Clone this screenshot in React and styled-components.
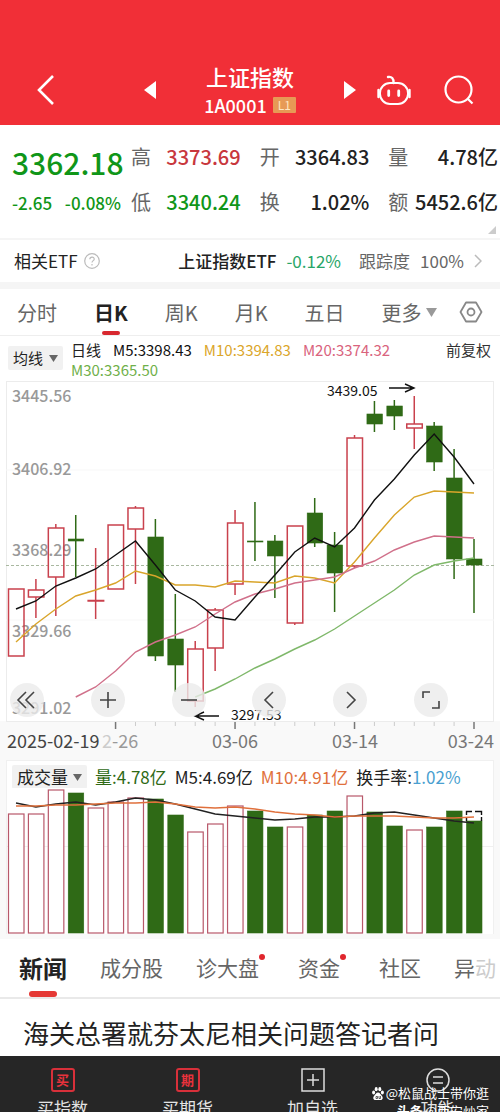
import React, { useState } from 'react'
import styled, { createGlobalStyle } from 'styled-components'

const GlobalStyle = createGlobalStyle`
  * {
    box-sizing: border-box;
  }
  body {
    margin: 0;
    background: #f9f9f9;
    color: #222;
    font-family: 'Noto Sans CJK SC', 'Noto Sans', sans-serif;
  }
  button, select {
    margin: 0;
    padding: 0;
    border: 0;
    background: none;
    color: inherit;
    font: inherit;
  }
  a {
    color: inherit;
    text-decoration: none;
  }
  svg {
    display: block;
    flex-shrink: 0;
  }
`

const Screen = styled.div`
  position: relative;
  overflow: hidden;
`

const Header = styled.header`
  display: grid;
  grid-template-columns: 1fr 212px 1fr;
  align-items: center;
  height: 125px;
  padding-top: 54px;
  background: #f12f37;
  color: white;
`

const HeaderSide = styled.div`
  display: flex;
  align-items: center;
  gap: 32px;
  padding: ${p => (p.$end ? '0 26px 0 0' : '0 0 0 36px')};
  justify-content: ${p => (p.$end ? 'flex-end' : 'flex-start')};
`

const HeaderCenter = styled.div`
  display: flex;
  align-items: center;
  justify-content: space-between;
  text-align: center;
`

const Title = styled.h1`
  margin: 0;
  font-size: 22px;
  font-weight: 500;
  line-height: 30px;
`

const Code = styled.div`
  display: flex;
  align-items: center;
  justify-content: center;
  gap: 6px;
  font-size: 18px;
  font-weight: 500;
  line-height: 28px;
`

const Level = styled.span`
  padding: 0 5px;
  border-radius: 1px;
  background: #e79a55;
  color: #ffe6c0;
  font-size: 12px;
  font-weight: 400;
  line-height: 16px;
`

const Quote = styled.section`
  position: relative;
  display: flex;
  gap: 10px;
  height: 115px;
  padding: 10px 2px 0 12px;
  border-bottom: 2px solid #f5f5f5;
  background: white;
`

const Last = styled.div`
  width: 109px;
  color: #109618;
`

const LastPrice = styled.div`
  font-size: 30px;
  font-weight: 500;
  line-height: 54px;
`

const Change = styled.div`
  display: flex;
  justify-content: space-between;
  font-size: 17px;
  font-weight: 500;
  line-height: 28px;
`

const Stats = styled.dl`
  flex: 1;
  display: grid;
  grid-template-columns: repeat(3, 1fr);
  grid-auto-rows: 45px;
  column-gap: 19px;
  margin: 0;
`

const Stat = styled.div`
  display: flex;
  justify-content: space-between;
  font-size: 20px;
  line-height: 44px;
  dt {
    color: #666;
  }
  dd {
    margin: 0;
    color: ${p => p.$color || '#222'};
    font-weight: 500;
    white-space: nowrap;
  }
`

const Corner = styled.svg`
  position: absolute;
  right: 4px;
  bottom: 4px;
`

const EtfRow = styled.section`
  display: flex;
  align-items: center;
  height: 49px;
  padding: 0 18px 0 14px;
  border-bottom: 7px solid #f5f5f5;
  background: white;
  font-size: 17px;
  line-height: 24px;
  white-space: nowrap;
`

const EtfLink = styled.a`
  display: flex;
  align-items: center;
  gap: 10px;
  margin-left: auto;
  strong {
    font-weight: 500;
  }
`

const EtfChange = styled.span`
  padding-right: 8px;
  color: #27a567;
`

const Muted = styled.span`
  color: #666;
`

const Help = styled.button`
  padding-left: 6px;
`

const Periods = styled.nav`
  display: flex;
  align-items: center;
  gap: 37px;
  height: 47px;
  padding: 0 17px;
  border-bottom: 1px solid #eee;
  background: white;
`

const Period = styled.button`
  display: flex;
  align-items: center;
  gap: 4px;
  position: relative;
  height: 46px;
  color: ${p => (p.$active ? '#222' : '#666')};
  font-size: 20px;
  font-weight: ${p => (p.$active ? 700 : 400)};
  white-space: nowrap;
  &::after {
    content: '';
    display: ${p => (p.$active ? 'block' : 'none')};
    position: absolute;
    bottom: 0;
    left: calc(50% - 9px);
    width: 18px;
    height: 4px;
    border-radius: 2px;
    background: #d8282f;
  }
`

const More = styled(Period)`
  margin-right: -16px;
`

const Settings = styled.button`
  margin-left: auto;
`

const Legend = styled.div`
  display: flex;
  gap: 8px;
  height: 44px;
  padding: 4px 9px 0 8px;
  background: white;
  font-size: 15px;
  line-height: 20px;
`

const Chip = styled.label`
  display: flex;
  align-items: center;
  gap: 5px;
  height: 24px;
  padding: 0 5px;
  border-radius: 2px;
  background: #f1f1f1;
  select {
    appearance: none;
    line-height: 24px;
  }
`

const LegendChip = styled(Chip)`
  margin-top: 6px;
`

const Averages = styled.div`
  flex: 1;
  display: flex;
  flex-wrap: wrap;
  column-gap: 12px;
`

const Colored = styled.span`
  color: ${p => p.$color};
`

const Adjust = styled.button`
  align-self: flex-start;
  color: #333;
  line-height: 20px;
`

const ChartArea = styled.section`
  position: relative;
`

const Chart = styled.svg`
  width: 100%;
  height: auto;
  font-family: 'Noto Sans CJK SC', 'Noto Sans', sans-serif;
`

const ChartButtons = styled.div`
  position: absolute;
  bottom: 43px;
  left: 10px;
  right: 52px;
  display: flex;
  justify-content: space-between;
`

const RoundButton = styled.button`
  display: flex;
  align-items: center;
  justify-content: center;
  width: 34px;
  height: 34px;
  border-radius: 50%;
  background: rgba(235, 235, 235, 0.8);
`

const VolumeHead = styled.div`
  display: flex;
  align-items: center;
  gap: 8px;
  height: 28px;
  margin: 0 6px;
  padding: 5px 5px 0;
  border: 1px solid #f0f0f0;
  border-bottom: 0;
  background: white;
  font-size: 17px;
  line-height: 24px;
  white-space: nowrap;
`

const NewsTabs = styled.nav`
  display: flex;
  gap: 33px;
  height: 60px;
  padding: 0 0 0 19px;
  overflow: hidden;
  border-bottom: 2px solid #e9e9e9;
  background: white;
`

const NewsTab = styled.button`
  position: relative;
  flex-shrink: 0;
  padding: 0 ${p => (p.$dot ? 6 : 0)}px 2px 0;
  color: ${p => (p.$active ? '#222' : '#666')};
  font-size: ${p => (p.$active ? 24 : 21)}px;
  font-weight: ${p => (p.$active ? 700 : 400)};
  &::after {
    content: '';
    display: ${p => (p.$active ? 'block' : 'none')};
    position: absolute;
    bottom: 0;
    left: calc(50% - 14px);
    width: 28px;
    height: 6px;
    border-radius: 3px;
    background: #e53935;
  }
`

const Dot = styled.i`
  position: absolute;
  top: 15px;
  right: 0;
  width: 6px;
  height: 6px;
  border-radius: 50%;
  background: #e0262d;
`

const FadedChar = styled.span`
  color: #ccc;
`

const Headline = styled.a`
  display: block;
  height: 57px;
  padding-left: 23px;
  overflow: hidden;
  background: white;
  font-size: 26px;
  line-height: 68px;
  white-space: nowrap;
`

const BottomBar = styled.nav`
  display: grid;
  grid-template-columns: repeat(4, 1fr);
  height: 56px;
  overflow: hidden;
  background: #262626;
`

const BottomItem = styled.button`
  display: flex;
  flex-direction: column;
  align-items: center;
  gap: 4px;
  padding-top: 12px;
  color: #e4e4e4;
  font-size: 17px;
  line-height: 24px;
`

const Stamp = styled.span`
  width: 24px;
  height: 24px;
  border: 2px solid #d8303a;
  border-radius: 3px;
  color: #e8323c;
  font-size: 13px;
  font-weight: 700;
  line-height: 20px;
`

const Watermark = styled.div`
  position: absolute;
  right: 11px;
  bottom: -8px;
  color: white;
  font-size: 13px;
  line-height: 18px;
  pointer-events: none;
  div {
    display: flex;
    align-items: center;
    justify-content: flex-end;
    gap: 2px;
  }
`

const RED = '#c9414d'
const GREEN = '#2f6a16'

// [body top, body bottom, high, low, is falling]
const candles = [
  [209, 276, 209, 276],
  [210, 217, 199, 238],
  [148, 197, 144, 236],
  [159, 161, 135, 197, true],
  [220.5, 221, 168, 239],
  [145, 209, 145, 209],
  [128, 149, 126, 204],
  [157, 276, 139, 281, true],
  [259, 285, 214, 312, true],
  [269, 321, 261, 327],
  [230, 268, 228, 291],
  [143, 204, 130, 215],
  [161, 162, 122, 181, true],
  [161, 176, 155, 218, true],
  [146, 243, 146, 245],
  [133, 163, 118, 167, true],
  [165, 193, 152, 232, true],
  [58, 186, 55, 188],
  [34, 44, 21, 52, true],
  [26, 36, 20, 50, true],
  [44, 48, 16, 69],
  [46, 82, 42, 91, true],
  [98, 179, 69, 199, true],
  [179, 185, 159, 233, true],
]

const averages = [
  { color: '#d9a52b', start: 0, ys: [262, 244, 229, 216, 210, 203, 191, 196, 205, 205, 207, 201, 202, 203, 196, 198, 203, 182, 158, 135, 117, 111, 112, 113] },
  { color: '#d0708a', start: 3, ys: [317, 307, 291, 272, 262, 255, 247, 234, 222, 214, 209, 203, 200, 197, 188, 181, 170, 162, 156, 157, 158] },
  { color: '#7fb86a', start: 9, ys: [317, 309, 299, 288, 279, 269, 260, 249, 236, 223, 210, 195, 185, 181, 178] },
  { color: '#111', start: 0, ys: [229, 221, 206, 198, 189, 175, 161, 185, 210, 221, 237, 240, 217, 195, 172, 158, 167, 148, 120, 99, 75, 54, 77, 104] },
]

const volumes = [26, 26, 2, 5, 20, 14, 10, 11, 27, 44, 36, 18, 23, 39, 39, 27, 23, 8, 24, 38, 42, 39, 23, 33]

const volumeAverages = [
  { color: '#222', start: 0, ys: [15, 19, 16, 14, 17, 14, 10, 12, 16, 21, 26, 28, 30, 32, 31, 29, 29, 28, 25, 24, 27, 30, 33, 35] },
  { color: '#e0703c', start: 0, ys: [18, 18, 17, 17, 16, 15, 15, 14, 16, 19, 20, 19, 21, 24, 26, 27, 29, 28, 28, 28, 29, 30, 30, 29] },
]

const prices = [
  ['3445.56', 22],
  ['3406.92', 95],
  ['3368.29', 176],
  ['3329.66', 257],
  ['3291.02', 334],
]

const cx = i => 16 + (i * 458) / 23

const toPoints = line => line.ys.map((y, i) => `${cx(i + line.start)},${y}`).join(' ')

const Caret = ({ color = '#666', size = 9 }) => (
  <svg width={size} height={size} viewBox="0 0 10 10">
    <path d="M0 1h10L5 9z" fill={color} />
  </svg>
)

const stroke = (color, width = 2) => ({
  fill: 'none',
  stroke: color,
  strokeWidth: width,
})

function PriceChart() {
  return (
    <Chart viewBox="0 0 500 380">
      <rect width="500" height="341" fill="#fff" />
      <rect x="6.5" y="1.5" width="487" height="340" {...stroke('#ececec', 1)} />
      <path d="M6 90H494M6 240H494" {...stroke('#f7f7f7', 1)} />
      <g fill="#999" fontSize="16" fontWeight="500">
        {prices.map(([label, y]) => (
          <text key={label} x="12" y={y}>
            {label}
          </text>
        ))}
      </g>
      <path d="M6 185.5H494" strokeDasharray="3 2" {...stroke('#a9b8a0', 1)} />
      {candles.map(([top, bottom, high, low, falling], i) => {
        const x = cx(i)
        const color = falling ? GREEN : RED
        return (
          <g key={i} stroke={color} strokeWidth="1.5">
            <path d={`M${x} ${high}V${top}M${x} ${bottom}V${low}`} />
            <rect
              x={x - 7.5}
              y={top}
              width="15.5"
              height={bottom - top}
              fill={falling ? GREEN : 'none'}
              strokeWidth={falling ? 0.6 : 1.5}
            />
          </g>
        )
      })}
      {averages.map(line => (
        <polyline key={line.color} points={toPoints(line)} {...stroke(line.color, 1.4)} />
      ))}
      <g fontSize="14" fill="#111">
        <text x="327" y="16">
          3439.05
        </text>
        <text x="231" y="340">
          3297.53
        </text>
      </g>
      <path d="M389 8H413M405 4l9 4l-9 4M219 336H196M204 332l-9 4l9 4" {...stroke('#111', 1.4)} />
      {candles.map((_, i) => {
        if (i < 5) return null
        const major = (i - 5) % 6 === 0
        return (
          <path
            key={i}
            d={`M${cx(i)} 342V${major ? 349 : 346}`}
            {...stroke(major ? '#777' : '#ccc', major ? 1.5 : 1)}
          />
        )
      })}
      <g fontSize="18" fill="#777">
        <text x="102" y="368">
          <tspan fill="#ccc">2</tspan>
          <tspan fill="#999">-26</tspan>
        </text>
        <text x="7" y="368" fill="#444">
          2025-02-19
        </text>
        <text x="235" y="368" textAnchor="middle">
          03-06
        </text>
        <text x="355" y="368" textAnchor="middle">
          03-14
        </text>
        <text x="494" y="368" textAnchor="end">
          03-24
        </text>
      </g>
    </Chart>
  )
}

function VolumeChart() {
  return (
    <Chart viewBox="0 0 500 151">
      <rect x="6" width="488" height="146" fill="#fff" />
      <path d="M6.5 0V146M493.5 0V146M6 58.5H494" {...stroke('#f0f0f0', 1)} />
      {volumes.map((top, i) => {
        const falling = candles[i][4]
        return (
          <rect
            key={i}
            x={cx(i) - 7.5}
            y={top}
            width="15.5"
            height={145 - top}
            fill={falling ? GREEN : '#fff'}
            stroke={falling ? GREEN : '#b8586a'}
            strokeWidth={falling ? 0.6 : 1.2}
          />
        )
      })}
      <path
        d="M466.5 27V23.5H472M475 23.5H481.5V27M466.5 29V33M481.5 29V33"
        {...stroke('#111', 1.4)}
      />
      {volumeAverages.map(line => (
        <polyline key={line.color} points={toPoints(line)} {...stroke(line.color, 1.4)} />
      ))}
    </Chart>
  )
}

const chartButtons = [
  ['最早', 'M10 3L2 11l8 8M18 3l-8 8l8 8'],
  ['放大', 'M11 3V19M3 11H19'],
  ['缩小', 'M3 11H19'],
  ['向左', 'M15 3L7 11l8 8'],
  ['向右', 'M8 3l8 8l-8 8'],
  ['全屏', 'M3 9V3H10M12 19H19V12'],
]

const periods = ['分时', '日K', '周K', '月K', '五日']

const newsTabs = [['新闻'], ['成分股'], ['诊大盘', true], ['资金', true], ['社区']]

export default function App() {
  const [period, setPeriod] = useState('日K')
  const [news, setNews] = useState('新闻')

  return (
    <Screen>
      <GlobalStyle />
      <Header>
        <HeaderSide>
          <button aria-label="返回">
            <svg width="20" height="32" viewBox="0 0 20 32">
              <path d="M17 2L3 16L17 30" {...stroke('#fff', 2.6)} />
            </svg>
          </button>
        </HeaderSide>
        <HeaderCenter>
          <button aria-label="上一个">
            <svg width="12" height="18" viewBox="0 0 12 18">
              <path d="M12 0V18L0 9z" fill="#fff" />
            </svg>
          </button>
          <div>
            <Title>上证指数</Title>
            <Code>
              1A0001 <Level>L1</Level>
            </Code>
          </div>
          <button aria-label="下一个">
            <svg width="12" height="18" viewBox="0 0 12 18">
              <path d="M0 0V18L12 9z" fill="#fff" />
            </svg>
          </button>
        </HeaderCenter>
        <HeaderSide $end>
          <button aria-label="助手">
            <svg width="36" height="32" viewBox="0 0 36 32">
              <path d="M12 3c3.500-.8 6 1.500 5.500 6" strokeLinecap="round" {...stroke('#fff', 2.4)} />
              <rect x="4" y="9" width="28" height="21" rx="10" {...stroke('#fff', 2)} />
              <path d="M2.500 16V23M33.500 16V23" strokeLinecap="round" {...stroke('#fff', 2.4)} />
              <path d="M12.700 17v4.500M22.700 17v4.500" strokeLinecap="round" {...stroke('#fff', 2.8)} />
            </svg>
          </button>
          <button aria-label="搜索">
            <svg width="30" height="30" viewBox="0 0 30 30">
              <circle cx="14.5" cy="14.5" r="13" {...stroke('#fff', 2.2)} />
              <path d="M23.5 23.5L28.5 28.5" {...stroke('#fff', 2.2)} />
            </svg>
          </button>
        </HeaderSide>
      </Header>

      <Quote>
        <Last>
          <LastPrice>3362.18</LastPrice>
          <Change>
            <span>-2.65</span>
            <span>-0.08%</span>
          </Change>
        </Last>
        <Stats>
          <Stat $color="#c8373d">
            <dt>高</dt>
            <dd>3373.69</dd>
          </Stat>
          <Stat>
            <dt>开</dt>
            <dd>3364.83</dd>
          </Stat>
          <Stat>
            <dt>量</dt>
            <dd>4.78亿</dd>
          </Stat>
          <Stat $color="#109618">
            <dt>低</dt>
            <dd>3340.24</dd>
          </Stat>
          <Stat>
            <dt>换</dt>
            <dd>1.02%</dd>
          </Stat>
          <Stat>
            <dt>额</dt>
            <dd>5452.6亿</dd>
          </Stat>
        </Stats>
        <Corner width="8" height="8" viewBox="0 0 8 8">
          <path d="M8 0V8H0z" fill="#ccc" />
        </Corner>
      </Quote>

      <EtfRow>
        相关ETF
        <Help aria-label="说明">
          <svg width="16" height="16" viewBox="0 0 16 16">
            <circle cx="8" cy="8" r="7.3" {...stroke('#bbb', 1.2)} />
            <path d="M5.8 6.2c.2-3 4.6-2.7 4.4 0c-.1 1.4-2.2 1.6-2.2 3.3M8 11v1.400" {...stroke('#bbb', 1.2)} />
          </svg>
        </Help>
        <EtfLink href="#etf">
          <strong>上证指数ETF</strong>
          <EtfChange>-0.12%</EtfChange>
          <Muted>跟踪度</Muted>
          <Muted>100%</Muted>
          <svg width="8" height="14" viewBox="0 0 8 14">
            <path d="M1 1l6 6l-6 6" {...stroke('#bbb', 1.5)} />
          </svg>
        </EtfLink>
      </EtfRow>

      <Periods>
        {periods.map(p => (
          <Period key={p} $active={p === period} onClick={() => setPeriod(p)}>
            {p}
          </Period>
        ))}
        <More>
          更多
          <Caret color="#999" size={11} />
        </More>
        <Settings aria-label="设置">
          <svg width="24" height="24" viewBox="0 0 24 24">
            <path d="M7 2.5H17L22.5 12L17 21.5H7L1.5 12z" strokeLinejoin="round" {...stroke('#888', 1.8)} />
            <circle cx="12" cy="12" r="3.5" {...stroke('#888', 1.8)} />
          </svg>
        </Settings>
      </Periods>

      <Legend>
        <LegendChip>
          <select aria-label="均线">
            <option>均线</option>
          </select>
          <Caret />
        </LegendChip>
        <Averages>
          <span>日线</span>
          <Colored $color="#111">M5:3398.43</Colored>
          <Colored $color="#dba62a">M10:3394.83</Colored>
          <Colored $color="#d9637d">M20:3374.32</Colored>
          <Colored $color="#6fb04a">M30:3365.50</Colored>
        </Averages>
        <Adjust>前复权</Adjust>
      </Legend>

      <ChartArea>
        <PriceChart />
        <ChartButtons>
          {chartButtons.map(([label, d]) => (
            <RoundButton key={label} aria-label={label}>
              <svg width="22" height="22" viewBox="0 0 22 22">
                <path d={d} {...stroke('#444', 1.6)} />
              </svg>
            </RoundButton>
          ))}
        </ChartButtons>
      </ChartArea>

      <section>
        <VolumeHead>
          <Chip>
            <select aria-label="成交量">
              <option>成交量</option>
            </select>
            <Caret />
          </Chip>
          <Colored $color={GREEN}>量:4.78亿</Colored>
          <span>M5:4.69亿</span>
          <Colored $color="#e0703c">M10:4.91亿</Colored>
          <span>
            换手率:<Colored $color="#4a9fd0">1.02%</Colored>
          </span>
        </VolumeHead>
        <VolumeChart />
      </section>

      <NewsTabs>
        {newsTabs.map(([label, dot]) => (
          <NewsTab key={label} $dot={dot} $active={label === news} onClick={() => setNews(label)}>
            {label}
            {dot && <Dot />}
          </NewsTab>
        ))}
        <NewsTab>
          异<FadedChar>动</FadedChar>
        </NewsTab>
      </NewsTabs>
      <Headline href="#news">海关总署就芬太尼相关问题答记者问</Headline>

      <BottomBar>
        <BottomItem>
          <Stamp>买</Stamp>
          买指数
        </BottomItem>
        <BottomItem>
          <Stamp>期</Stamp>
          买期货
        </BottomItem>
        <BottomItem>
          <svg width="24" height="24" viewBox="0 0 24 24">
            <path d="M1 1H23V23H1zM12 6V18M6 12H18" {...stroke('#ddd', 1.5)} />
          </svg>
          加自选
        </BottomItem>
        <BottomItem>
          <svg width="24" height="24" viewBox="0 0 24 24">
            <circle cx="12" cy="12" r="11" {...stroke('#ddd', 1.5)} />
            <path d="M7 9H17M7 15H17" {...stroke('#ddd', 1.5)} />
          </svg>
          功能
        </BottomItem>
      </BottomBar>
      <Watermark>
        <div>
          <svg width="12" height="13" viewBox="0 0 12 13" fill="#fff">
            <ellipse cx="1.6" cy="5.5" rx="1.5" ry="2" />
            <ellipse cx="4.2" cy="2.2" rx="1.5" ry="2.1" />
            <ellipse cx="7.8" cy="2.2" rx="1.5" ry="2.1" />
            <ellipse cx="10.4" cy="5.5" rx="1.5" ry="2" />
            <path d="M6 5.5c2 0 2.5 2 4 3.5c1.5 2 .5 4-1.5 4H3.500C1.5 13 .5 11 2 9c1.5-1.5 2-3.5 4-3.5z" />
            <path d="M4 9.5h1.5v2H4zM7 9v2.5h1.5V9" fill="none" stroke="#262626" strokeWidth=".7" />
          </svg>
          @松鼠战士带你逛
        </div>
        <div>
          <b>头条</b> @西安炒家
        </div>
      </Watermark>
    </Screen>
  )
}
